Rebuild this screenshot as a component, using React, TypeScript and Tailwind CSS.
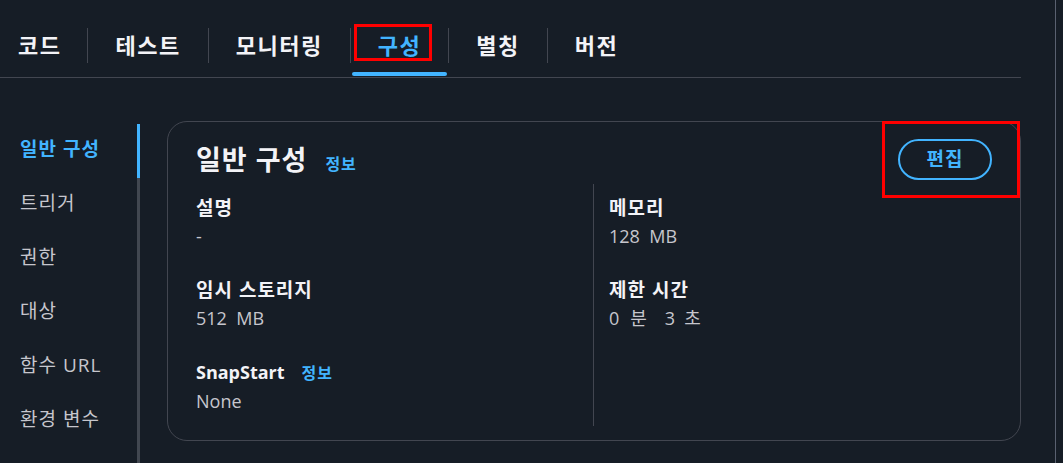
const tabs = ['코드', '테스트', '모니터링', '구성', '별칭', '버전'];
const navItems = ['일반 구성', '트리거', '권한', '대상', '함수 URL', '환경 변수'];

const Field = ({
  label,
  info,
  latin,
  children,
}: {
  label: string;
  info?: boolean;
  latin?: boolean;
  children: React.ReactNode;
}) => (
  <div className="flex flex-col">
    <div className="flex items-baseline gap-[17px] leading-[26px] font-bold text-[#f3f3f7]">
      <span className={latin ? 'text-[18px]' : 'text-[19px] tracking-[1px]'}>{label}</span>
      {info && <span className="text-[16px] tracking-[1px] text-[#42b4ff]">정보</span>}
    </div>
    <div className="mt-[2px] text-[18px] leading-[26px] text-[#c6c6cd] whitespace-pre">{children}</div>
  </div>
);

export default function App() {
  return (
    <div className="relative w-[1063px] h-[463px] overflow-hidden bg-[#161d26] flex font-['Open_Sans','Noto_Sans_CJK_KR',sans-serif]">
      <div className="w-[1055px] flex flex-col">
        {/* Tabs */}
        <div className="w-[1021px] h-[78px] border-b border-[#424650] flex items-start pt-[28px] pl-[1px]">
          {tabs.map((t, i) => (
            <div key={t} className="flex items-start">
              {i > 0 && <div className="w-px h-[35px] bg-[#424650]" />}
              <div className="flex flex-col">
                <div
                  className={`h-[35px] flex items-center text-[22px] tracking-[1.5px] font-bold ${
                    i === 0 ? 'pl-[17px] pr-[26px]' : 'pl-[27px] pr-[27px]'
                  } ${t === '구성' ? 'text-[#42b4ff]' : 'text-[#f3f3f7]'}`}
                >
                  {t}
                </div>
                <div className={`mt-[9px] mx-[1px] h-[4px] rounded-full ${t === '구성' ? 'bg-[#42b4ff]' : ''}`} />
              </div>
            </div>
          ))}
        </div>

        {/* Body */}
        <div className="flex-1 flex pt-[43px]">
          <div className="flex">
            <div className="w-[137px] mt-[3px] flex flex-col">
              {navItems.map((n, i) => (
                <div
                  key={n}
                  className={`h-[54px] flex items-center pl-[20px] pb-[4px] text-[19px] tracking-[1px] ${
                    i === 0 ? 'font-bold text-[#42b4ff]' : 'text-[#c6c6cd]'
                  }`}
                >
                  {n}
                </div>
              ))}
            </div>
            <div className="w-[3px] mt-[3px] bg-[#414750]">
              <div className="h-[54px] bg-[#42b4ff]" />
            </div>
          </div>

          <div className="ml-[27px] w-[854px] h-[320px] border border-[#424650] rounded-[20px] px-[28px] pt-[17px] pb-[14px] flex flex-col">
            <div className="flex items-center justify-between h-[41px]">
              <div className="flex items-baseline gap-[18px]">
                <span className="text-[27px] tracking-[1px] leading-[32px] font-bold text-[#f3f3f7]">일반 구성</span>
                <span className="text-[16px] tracking-[1px] font-bold text-[#42b4ff]">정보</span>
              </div>
              <button className="w-[94px] h-[41px] rounded-full border-2 border-[#42b4ff] text-[19px] tracking-[1px] font-bold text-[#42b4ff]">
                편집
              </button>
            </div>
            <div className="mt-[4px] flex-1 flex">
              <div className="w-[397px] pt-[11px] flex flex-col gap-[28px]">
                <Field label="설명">-</Field>
                <Field label="임시 스토리지">512  MB</Field>
                <Field label="SnapStart" info latin>
                  None
                </Field>
              </div>
              <div className="flex-1 border-l border-[#424650] pl-[15px] pt-[11px] flex flex-col gap-[28px]">
                <Field label="메모리">128  MB</Field>
                <Field label="제한 시간">
                  <span>0</span>
                  <span className="ml-[11px]">분</span>
                  <span className="ml-[18px]">3</span>
                  <span className="ml-[9px]">초</span>
                </Field>
              </div>
            </div>
          </div>
        </div>
      </div>
      <div className="w-px bg-[#5a6170]" />

      {/* Annotation boxes */}
      <div className="absolute left-[354px] top-[24px] w-[78px] h-[37px] border-[3px] border-[#ff0000]" />
      <div className="absolute left-[882px] top-[121px] w-[138px] h-[77px] border-[3px] border-[#ff0000]" />
    </div>
  );
}
